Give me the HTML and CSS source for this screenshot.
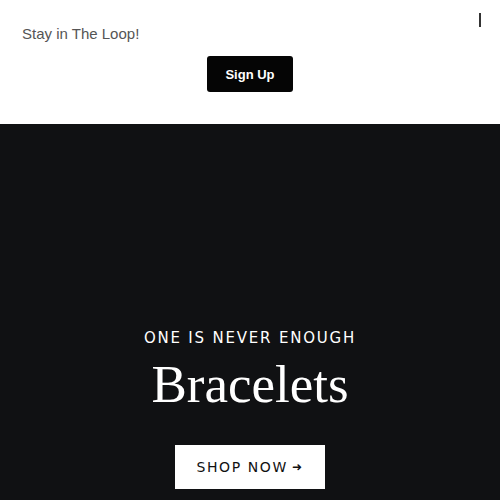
FILE: index.html
```html
<!DOCTYPE html>
<html lang="en">
<head>
    <meta charset="UTF-8">
    <meta name="viewport" content="width=device-width, initial-scale=1.0">
    <title>Bracelets</title>
    <link rel="stylesheet" href="styles.css">
</head>
<body>
    <div class="signup-bar">
        <span class="close-mark"></span>
        <p class="signup-text">Stay in The Loop!</p>
        <div class="signup-action">
            <button class="signup-button">Sign Up</button>
        </div>
    </div>
    <section class="hero">
        <p class="hero-kicker">ONE IS NEVER ENOUGH</p>
        <h1 class="hero-title">Bracelets</h1>
        <a class="shop-button" href="#">SHOP NOW <span class="arrow">&#10140;</span></a>
    </section>
</body>
</html>
```
FILE: styles.css
```css
body {
    margin: 0;
    font-family: "Liberation Sans", Arial, sans-serif;
    background: #fff;
}
.signup-bar {
    position: relative;
    height: 124px;
    padding: 25px 22px 0;
    box-sizing: border-box;
}
.close-mark {
    position: absolute;
    top: 13px;
    left: 479px;
    width: 2px;
    height: 14px;
    background: #333;
}
.signup-text {
    margin: 0;
    font-size: 15px;
    color: #555;
    line-height: 18px;
}
.signup-action {
    display: flex;
    justify-content: center;
    margin-top: 13px;
}
.signup-button {
    width: 86px;
    height: 36px;
    background: #050505;
    color: #fff;
    border: none;
    border-radius: 3px;
    font-family: "Liberation Sans", Arial, sans-serif;
    font-weight: bold;
    font-size: 13px;
}
.hero {
    background: #101113;
    height: 376px;
    display: flex;
    flex-direction: column;
    align-items: center;
    padding-top: 205px;
    box-sizing: border-box;
    color: #fff;
}
.hero-kicker {
    margin: 0;
    font-family: "DejaVu Sans", sans-serif;
    font-size: 15px;
    letter-spacing: 1.8px;
    line-height: 18px;
}
.hero-title {
    margin: 7px 0 0;
    font-family: "Liberation Serif", serif;
    font-weight: normal;
    font-size: 53px;
    line-height: 60px;
}
.shop-button {
    margin-top: 31px;
    width: 150px;
    height: 44px;
    display: flex;
    align-items: center;
    justify-content: center;
    background: #fff;
    color: #111;
    text-decoration: none;
    font-family: "DejaVu Sans", sans-serif;
    font-size: 14px;
    letter-spacing: 1.6px;
}
.arrow {
    font-size: 12px;
    margin-left: 4px;
}
```
